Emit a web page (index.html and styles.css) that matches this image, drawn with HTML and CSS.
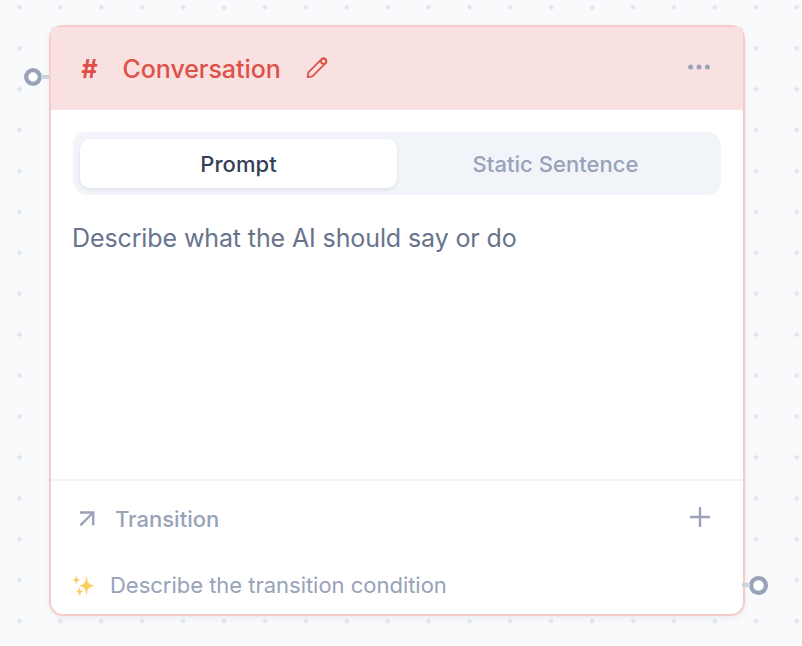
FILE: index.html
```
<!DOCTYPE html>
<html lang="en">
<head>
  <meta charset="UTF-8">
  <title>Conversation node</title>
  <meta name="viewport" content="width=device-width, initial-scale=1.0">
  <link rel="stylesheet" href="styles.css">
</head>
<body>
  <div class="canvas">
    <div class="node">
      <header class="node-header">
        <span class="hash">#</span>
        <span class="title">Conversation</span>
        <svg class="pencil" width="22" height="22" viewBox="0 0 22 22">
          <path d="M1.6 20.2l.5-3.6q.2-1.1 1-1.9L15.6 2.2a2.8 2.8 0 0 1 4 4L7.1 18.7q-.8.8-1.9 1z"/>
          <circle cx="17.6" cy="4.2" r="2.6"/>
        </svg>
        <svg class="more" width="24" height="6" viewBox="0 0 24 6">
          <circle cx="3.6" cy="3" r="2.5"/>
          <circle cx="12" cy="3" r="2.5"/>
          <circle cx="20.4" cy="3" r="2.5"/>
        </svg>
      </header>

      <div class="node-body">
        <div class="tabs">
          <button class="tab active">Prompt</button>
          <button class="tab">Static Sentence</button>
        </div>
        <p class="prompt">Describe what the AI should say or do</p>
      </div>

      <div class="transitions">
        <div class="row">
          <svg class="arrow" width="16" height="16" viewBox="0 0 16 16">
            <path d="M1 1.5h13.2v12.7M14.2 1.5L1.3 14.4"/>
          </svg>
          <span class="transition-title">Transition</span>
          <svg class="plus" width="20" height="20" viewBox="0 0 20 20">
            <path d="M10 1v18M1 10h18"/>
          </svg>
        </div>
        <div class="row condition">
          <svg class="sparkles" width="22" height="22" viewBox="0 0 22 22">
            <path d="M13.5 1.2C14.3 7.6 15 9.2 21 10.7C15 12.2 14.3 13.8 13.5 20.2C12.7 13.8 12 12.2 6.5 10.7C12 9.2 12.7 7.6 13.5 1.2z"/>
            <path d="M3.2 .8C3.6 3.5 4 4.2 6.4 5C4 5.8 3.6 6.5 3.2 9C2.8 6.5 2.4 5.8 .3 5C2.4 4.2 2.8 3.5 3.2 .8z"/>
            <path d="M6.6 12.2C7 14.9 7.4 15.6 9.8 16.5C7.4 17.4 7 18.1 6.6 20.8C6.2 18.1 5.8 17.4 3.5 16.5C5.8 15.6 6.2 14.9 6.6 12.2z"/>
          </svg>
          <span class="condition-text">Describe the transition condition</span>
        </div>
      </div>

      <span class="handle handle-in"></span>
      <span class="handle handle-out"></span>
    </div>
  </div>
</body>
</html>
```

FILE: styles.css
```
* { box-sizing: border-box; }
body { margin: 0; font-family: Inter, "Liberation Sans", sans-serif; }

.canvas {
  height: 646px;
  padding: 25px 57px 0 49px;
  overflow: hidden;
  background-color: #f9fafc;
  background-image: radial-gradient(circle, #e2e5ed 1.8px, rgba(226, 229, 237, 0) 2.6px);
  background-size: 40.92px 40.92px;
  background-position: -0.96px -13.06px;
}

.node {
  position: relative;
  display: flex;
  flex-direction: column;
  height: 591px;
  border: 2px solid #f7cbcb;
  border-radius: 14px;
  background: white;
  box-shadow: 0 2px 6px rgba(15, 23, 42, 0.06);
}

.node-header {
  display: flex;
  align-items: center;
  height: 83px;
  padding: 0 32px 0 30px;
  border-radius: 3px 3px 0 0;
  background: #f9e1e1;
  color: #de5048;
}
.hash {
  width: 41.5px;
  font-size: 25px;
  font-weight: 700;
  font-style: italic;
}
.title { font-size: 25px; font-weight: 550; letter-spacing: -0.06px; }
.pencil {
  margin: -1px 0 0 25px;
  fill: none;
  stroke: #de5048;
  stroke-width: 1.8;
  stroke-linejoin: round;
}
.more { margin: -4px 0 0 auto; fill: #98a2b8; }

.node-body { flex: 1; padding: 22px 22px 0 22px; }
.tabs {
  display: flex;
  height: 63px;
  padding: 7px;
  border-radius: 14px;
  background: #f1f4f9;
}
.tab {
  flex: 1;
  height: 49px;
  padding: 0;
  border: none;
  border-radius: 10px;
  background: none;
  font: 550 22px Inter, "Liberation Sans", sans-serif;
  letter-spacing: 0.05px;
  color: #98a2b8;
}
.tab.active {
  background: white;
  color: #354056;
  box-shadow: 0 2px 4px rgba(15, 23, 42, 0.08);
}
.prompt {
  margin: 26px 0 0 -1px;
  font-size: 25px;
  line-height: 34px;
  letter-spacing: -0.11px;
  color: #68748c;
}

.transitions {
  height: 135px;
  border-top: 2px solid #f1f4f9;
  padding: 19px 33px 0 22px;
}
.row { display: flex; align-items: center; height: 38px; color: #98a2b8; }
.arrow { margin: 0 0 0 6px; fill: none; stroke: #98a2b8; stroke-width: 2.4; }
.transition-title {
  margin-left: 20px;
  font-size: 22px;
  font-weight: 550;
  letter-spacing: 0;
}
.plus { margin: -5px 0 0 auto; fill: none; stroke: #98a2b8; stroke-width: 2.4; stroke-linecap: round; }
.condition { margin-top: 28px; }
.sparkles { margin-top: 1px; fill: #fbcf5b; stroke: #f5c06a; stroke-width: 0.3; }
.condition-text { margin-left: 15px; font-size: 22px; letter-spacing: -0.02px; }

/* connection points on the edges of the node */
.handle {
  position: absolute;
  width: 18.6px;
  height: 18.6px;
  border-radius: 50%;
  background: white;
  box-shadow: inset 0 0 0 4.3px #98a2b8;
}
.handle::after {
  content: "";
  position: absolute;
  top: 7.3px;
  width: 8px;
  height: 4px;
  background: #cbd5e1;
}
.handle-in { left: -27.4px; top: 40.6px; }
.handle-in::after { left: 17.8px; }
.handle-out { right: -25px; top: 549.2px; }
.handle-out::after { right: 18px; }
```
